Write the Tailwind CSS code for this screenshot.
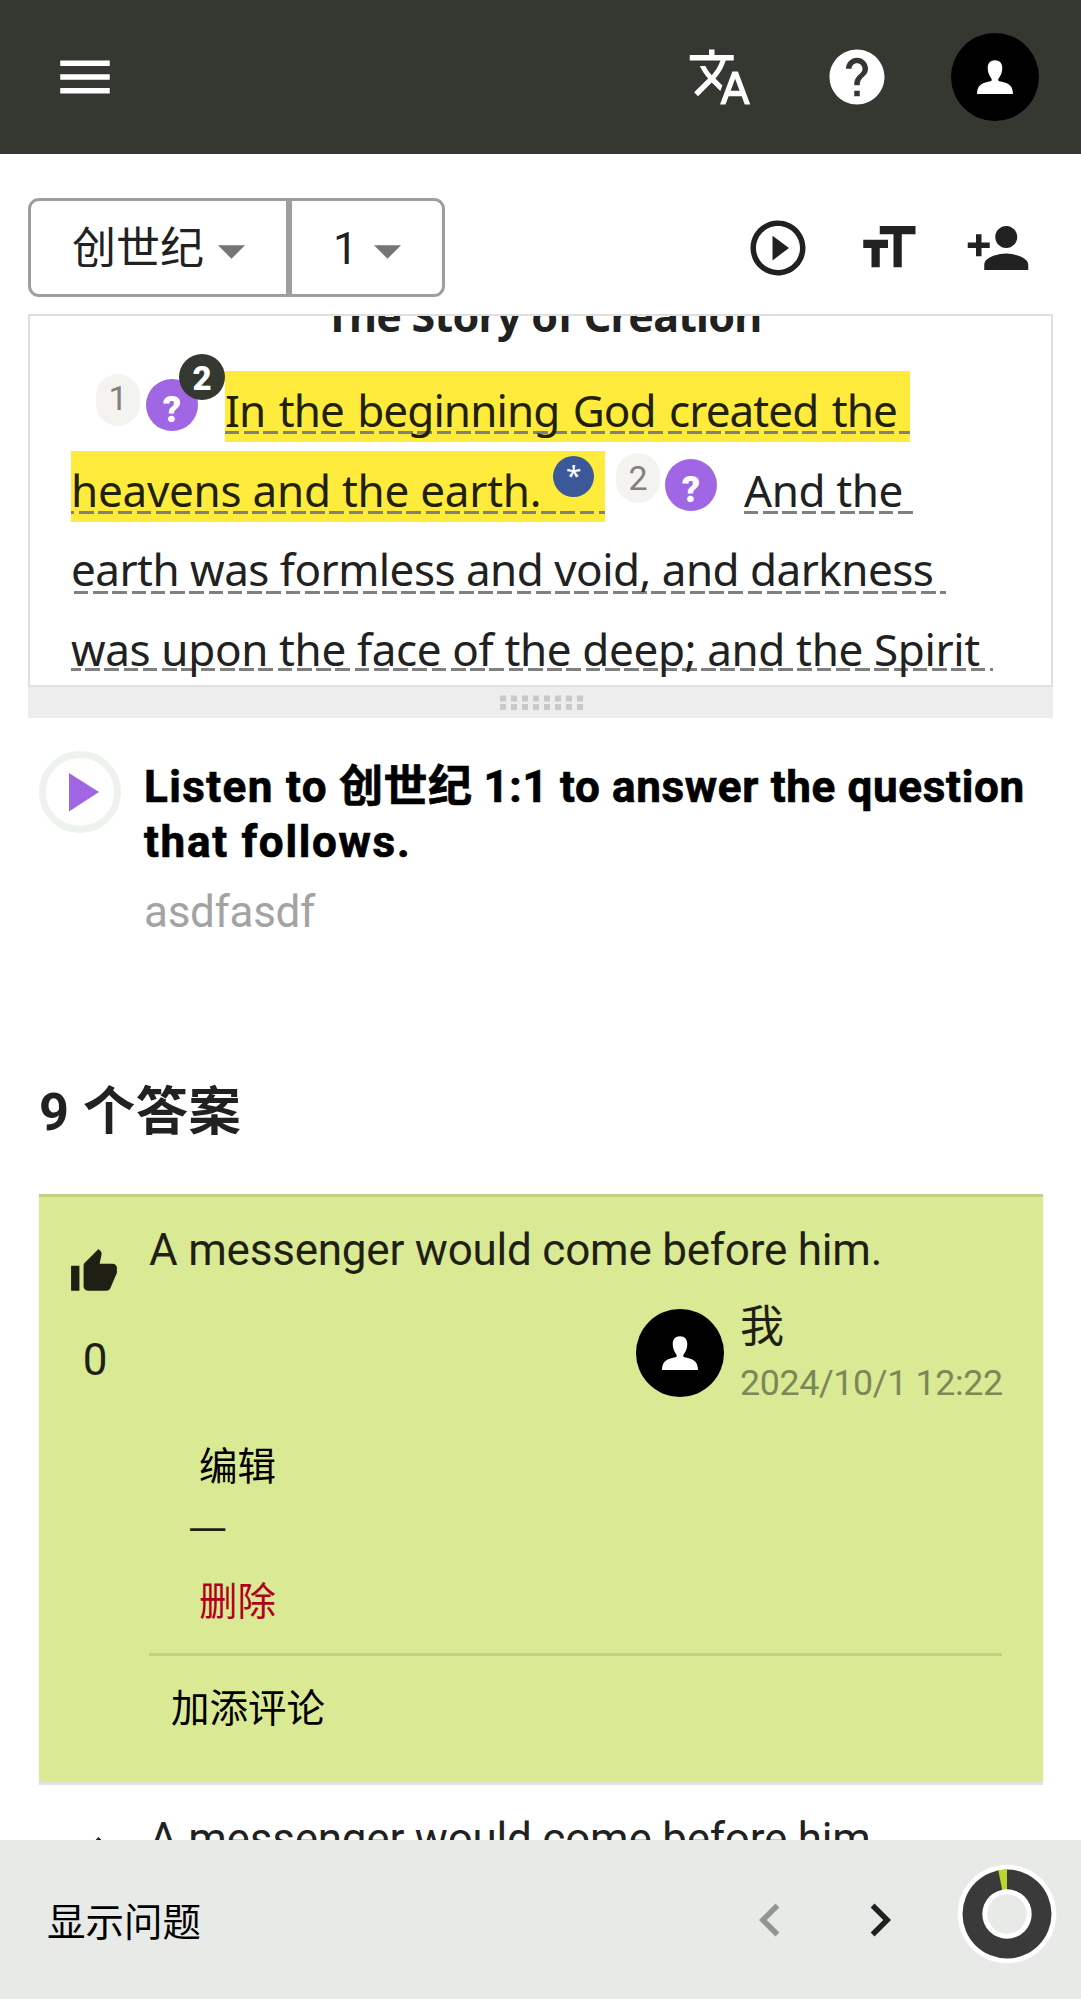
<!DOCTYPE html>
<html lang="zh-CN">
<head>
<meta charset="utf-8">
<title>创世纪 1</title>
<script src="https://cdn.jsdelivr.net/npm/@tailwindcss/browser@4"></script>
</head>
<body class="bg-white">
<div class="flex h-[1999px] w-[1081px] flex-col overflow-hidden bg-white font-[Roboto,'Noto_Sans_CJK_SC',sans-serif] text-[44px] text-[#212121]">

  <!-- App bar -->
  <header class="flex h-[154px] shrink-0 items-center bg-[#353831] pl-[52px] pr-[42px] text-white">
    <svg class="size-[66px]" viewBox="0 0 24 24" fill="currentColor"><path d="M3 18h18v-2H3v2zm0-5h18v-2H3v2zm0-7v2h18V6H3z"/></svg>
    <div class="ml-auto flex items-center">
      <svg class="size-[66px]" viewBox="0 0 24 24" fill="currentColor"><path d="M12.87 15.07l-2.54-2.51.03-.03c1.74-1.94 2.98-4.17 3.71-6.53H17V4h-7V2H8v2H1v1.99h11.17C11.5 7.92 10.44 9.75 9 11.35 8.07 10.32 7.3 9.19 6.69 8h-2c.73 1.63 1.73 3.17 2.98 4.56l-5.09 5.02L4 19l5-5 3.11 3.11.76-2.04zM18.5 10h-2L12 22h2l1.12-3h4.75L21 22h2l-4.5-12zm-2.62 7l1.62-4.33L19.12 17h-3.24z"/></svg>
      <svg class="ml-[71px] size-[66px]" viewBox="0 0 24 24" fill="currentColor"><path d="M12 2C6.48 2 2 6.48 2 12s4.48 10 10 10 10-4.48 10-10S17.52 2 12 2zm1 17h-2v-2h2v2zm2.07-7.75l-.9.92C13.45 12.9 13 13.5 13 15h-2v-.5c0-1.1.45-2.1 1.17-2.83l1.24-1.26c.37-.36.59-.86.59-1.41 0-1.1-.9-2-2-2s-2 .9-2 2H8c0-2.21 1.79-4 4-4s4 1.79 4 4c0 .88-.36 1.68-.93 2.25z"/></svg>
      <svg class="ml-[61px] size-[88px]" viewBox="0 0 88 88"><circle cx="44" cy="44" r="44" fill="#000"/><path fill="#fff" d="M44 27.3c4.6 0 7.3 3 7.3 7.8 0 5-2 8.2-3.6 10.4-.8 1.2-.6 2.3.7 2.7 7.2 1.5 13.6 2.6 13.6 12.8H26c0-10.2 6.4-11.3 13.6-12.8 1.3-.4 1.5-1.5.7-2.7-1.6-2.2-3.6-5.4-3.6-10.4 0-4.8 2.7-7.8 7.3-7.8z"/></svg>
    </div>
  </header>

  <!-- Chapter toolbar -->
  <div class="flex h-[160px] shrink-0 items-start pl-7 pr-[50px] pt-11">
    <div class="flex h-[99px] w-[261px] items-center rounded-l-[11px] border-[3px] border-[#9e9e9e] pl-[41px]">
      <span class="mt-[2px] leading-[60px]">创世纪</span>
      <svg class="ml-[14px] mt-[8px] h-[14px] w-[27px]" viewBox="0 0 10 5"><path fill="#757575" d="M0 0h10L5 5z"/></svg>
    </div>
    <div class="flex h-[99px] w-[156px] items-center rounded-r-[11px] border-[3px] border-[#9e9e9e] pl-[41px]">
      <span class="mt-[2px] leading-[60px]">1</span>
      <svg class="ml-[16px] mt-[8px] h-[14px] w-[27px]" viewBox="0 0 10 5"><path fill="#757575" d="M0 0h10L5 5z"/></svg>
    </div>
    <div class="ml-auto mt-[17px] flex items-center gap-11">
      <svg class="size-[66px]" viewBox="0 0 24 24" fill="currentColor"><path d="M10 16.5l6-4.500-6-4.500v9zM12 2C6.480 2 2 6.480 2 12s4.480 10 10 10 10-4.480 10-10S17.520 2 12 2zm0 18c-4.410 0-8-3.590-8-8s3.590-8 8-8 8 3.590 8 8-3.590 8-8 8z"/></svg>
      <svg class="size-[66px]" viewBox="0 0 24 24" fill="currentColor"><path d="M9 4v3h5v12h3V7h5V4H9zm-6 8h3v7h3v-7h3V9H3v3z"/></svg>
      <svg class="size-[66px]" viewBox="0 0 24 24" fill="currentColor"><path d="M15 12c2.210 0 4-1.790 4-4s-1.790-4-4-4-4 1.790-4 4 1.790 4 4 4zm-9-2V7H4v3H1v2h3v3h2v-3h3v-2H6zm9 4c-2.670 0-8 1.340-8 4v2h16v-2c0-2.660-5.330-4-8-4z"/></svg>
    </div>
  </div>

  <!-- Scripture pane -->
  <section class="mx-7 h-[373px] shrink-0 overflow-hidden border-2 border-[#e0e0e0] font-['Noto_Sans',sans-serif]" lang="en">
    <h2 class="-mt-[25px] h-[50px] pl-[295px] text-[43px] font-bold leading-[50px] tracking-[-0.75px] whitespace-nowrap">The Story of Creation</h2>
    <div class="mt-[30px] flex h-[80px] items-start whitespace-nowrap pl-[66px]">
      <span class="mt-[3px] h-[52px] w-11 rounded-[22px] bg-[#f4f3ef] text-center font-[Roboto] text-[34px] leading-[48px] text-[#808080]">1</span>
      <span class="relative ml-[6px] mt-2 size-[52px] rounded-full bg-[#a066e4] text-center font-[Roboto] text-[36px] font-black leading-[62px] text-white">?<span class="absolute -top-[25px] left-[33px] size-[46px] rounded-full bg-[#353831] text-[33px] leading-[49px]">2</span></span>
      <span class="ml-[27px] h-[71px] w-[685px] bg-[#ffeb3b] bg-[repeating-linear-gradient(90deg,#808080_0_14.5px,transparent_14.5px_19.25px)] bg-[length:100%_3px] bg-[position:0_60px] bg-no-repeat leading-[78px] tracking-[-0.9px] text-[#212109] [word-spacing:2.8px]">In the beginning God created the</span>
    </div>
    <div class="flex h-[79px] items-start whitespace-nowrap pl-[41px]">
      <span class="flex h-[71px] w-[534px] items-start bg-[#ffeb3b] bg-[repeating-linear-gradient(90deg,#808080_0_14.5px,transparent_14.5px_19.25px)] bg-[length:560px_3px] bg-[position:-11px_60px] bg-no-repeat leading-[78px] tracking-[-0.25px] text-[#212109]">heavens and the earth.<span class="ml-auto mr-[11px] mt-[5px] size-[41px] rounded-full bg-[#3b5998] text-center text-[28px] leading-[38px] text-white">*</span></span>
      <span class="ml-[11px] mt-[2px] h-[50px] w-11 rounded-[22px] bg-[#f4f3ef] text-center font-[Roboto] text-[34px] leading-[51px] text-[#808080]">2</span>
      <span class="ml-[5px] mt-2 size-[52px] rounded-full bg-[#a066e4] text-center font-[Roboto] text-[36px] font-black leading-[62px] text-white">?</span>
      <span class="ml-[27px] h-[71px] w-[169px] bg-[repeating-linear-gradient(90deg,#808080_0_14.5px,transparent_14.5px_19.25px)] bg-[length:100%_3px] bg-[position:0_60px] bg-no-repeat leading-[78px] tracking-[-0.4px]">And the</span>
    </div>
    <div class="flex h-[80px] items-start whitespace-nowrap pl-[41px]">
      <span class="h-[71px] w-[875px] bg-[repeating-linear-gradient(90deg,#808080_0_14.5px,transparent_14.5px_19.25px)] bg-[length:100%_3px] bg-[position:3px_61px] bg-no-repeat leading-[79px] tracking-[-0.52px]">earth was formless and void, and darkness</span>
    </div>
    <div class="flex h-[71px] items-start whitespace-nowrap pl-[41px]">
      <span class="h-[71px] w-[922px] bg-[repeating-linear-gradient(90deg,#808080_0_14.5px,transparent_14.5px_19.25px)] bg-[length:940px_3px] bg-[position:-5px_58px] bg-no-repeat leading-[78px] tracking-[-0.36px]">was upon the face of the deep; and the Spirit</span>
    </div>
  </section>

  <!-- Splitter handle -->
  <div class="mx-7 flex h-[31px] shrink-0 justify-center bg-[#ededed] pl-[2px] pt-[8px]">
    <svg class="h-[15px] w-[83px]" viewBox="0 0 83 15"><path stroke="#c9c9c9" stroke-width="6" stroke-dasharray="6 5" d="M0 3.500h83M0 12h83"/></svg>
  </div>

  <!-- Question -->
  <section class="flex h-[340px] shrink-0 items-start pl-[39px] pt-[33px]">
    <svg class="size-[82px]" viewBox="0 0 82 82"><circle cx="41" cy="41" r="37.500" fill="none" stroke="#eef2ed" stroke-width="7"/><path fill="#a066e4" d="M30 22v38.500L60 41z"/></svg>
    <div class="ml-[23px] pt-[9px]">
      <p class="font-bold leading-[55px] whitespace-nowrap text-black [-webkit-text-stroke:0.7px_#000]"><span class="tracking-[1.4px]">Listen to</span> <span class="tracking-[0.5px]">创世纪</span> <span class="tracking-[0.67px]">1:1 to answer the question</span><br><span class="tracking-[1.7px]">that follows.</span></p>
      <p class="mt-[15px] leading-[55px] tracking-[-0.3px] text-[#a3a3a3]">asdfasdf</p>
    </div>
  </section>

  <!-- Answers -->
  <main class="min-h-0 flex-1 overflow-hidden pl-[39px] pr-[38px]">
    <h3 class="mt-[25px] h-[111px] text-[52.25px] font-bold leading-[60px] tracking-[0.5px]">9 个答案</h3>
    <article class="flex h-[588px] border-t-[3px] border-[#c5d080] bg-[#dae993] pr-[41px] text-[#1f1f14]">
      <div class="flex w-[110px] flex-col items-center pt-[50px]">
        <svg class="size-[50px]" viewBox="0 0 24 24" fill="currentColor"><path d="M1 21h4V9H1v12zm22-11c0-1.100-.9-2-2-2h-6.310l.95-4.570.03-.32c0-.41-.17-.79-.44-1.060L14.170 1 7.590 7.590C7.220 7.950 7 8.450 7 9v10c0 1.100.9 2 2 2h9c.83 0 1.540-.5 1.840-1.220l3.020-7.050c.09-.23.14-.47.14-.73v-2z"/></svg>
        <span class="mt-[38px] pl-[2px] leading-[50px]">0</span>
      </div>
      <div class="flex-1 pt-[26px]">
        <p class="leading-[55px] tracking-[-0.22px] whitespace-nowrap">A messenger would come before him.</p>
        <div class="mt-[31px] flex h-[88px] justify-end">
          <svg class="size-[88px]" viewBox="0 0 88 88"><circle cx="44" cy="44" r="44" fill="#000"/><path fill="#fff" d="M44 27.300c4.600 0 7.300 3 7.300 7.800 0 5-2 8.200-3.600 10.400-.8 1.200-.6 2.300.7 2.700 7.200 1.500 13.600 2.600 13.600 12.800H26c0-10.200 6.400-11.300 13.600-12.800 1.300-.4 1.500-1.500.7-2.700-1.600-2.200-3.600-5.400-3.600-10.400 0-4.800 2.700-7.800 7.300-7.800z"/></svg>
          <div class="-mt-[10px] ml-[16px] w-[262px]">
            <p class="h-[56px] leading-[56px]">我</p>
            <p class="mt-[6px] text-[35.75px] leading-[44px] tracking-[-0.35px] whitespace-nowrap text-[#7b8757]">2024/10/1 12:22</p>
          </div>
        </div>
        <div class="flex flex-col pl-[41px] text-[38.5px]">
          <span class="mt-[42px] pl-[9px] leading-[56px] text-black">编辑</span>
          <span class="-ml-[2px] font-['Noto_Sans_CJK_SC'] text-[44px] leading-[56px]">—</span>
          <span class="mt-[23px] pl-[9px] leading-[56px] text-[#b00020]">删除</span>
        </div>
        <div class="mt-[23px] border-t-[3px] border-[#c5d080] pl-[22px] pt-[25px] text-[38.5px] leading-[56px] text-black">加添评论</div>
      </div>
    </article>
    <article class="flex h-[588px] border-t-[3px] border-[#e2e2e2] pr-[41px]">
      <div class="flex w-[110px] flex-col items-center pt-[50px]">
        <svg class="size-[50px]" viewBox="0 0 24 24" fill="currentColor"><path d="M1 21h4V9H1v12zm22-11c0-1.100-.9-2-2-2h-6.310l.95-4.570.03-.32c0-.41-.17-.79-.44-1.060L14.170 1 7.590 7.590C7.220 7.950 7 8.450 7 9v10c0 1.100.9 2 2 2h9c.83 0 1.540-.5 1.840-1.220l3.020-7.050c.09-.23.14-.47.14-.73v-2z"/></svg>
      </div>
      <p class="pt-[27px] leading-[55px] tracking-[-0.22px] whitespace-nowrap">A messenger would come before him.</p>
    </article>
  </main>

  <!-- Bottom navigation -->
  <footer class="flex h-[159px] shrink-0 items-center bg-[#e8eae7] pl-[47px] pr-[24px]">
    <span class="mt-[6px] text-[38.5px] leading-[56px] text-black">显示问题</span>
    <svg class="ml-auto size-[66px]" viewBox="0 0 24 24" fill="#929591"><path d="M15.410 7.410L14 6l-6 6 6 6 1.410-1.410L10.830 12z"/></svg>
    <svg class="ml-[44px] size-[66px]" viewBox="0 0 24 24" fill="currentColor"><path d="M10 6L8.590 7.410 13.170 12l-4.580 4.590L10 18l6-6z"/></svg>
    <svg class="-mt-[11px] ml-[44px] size-[100px]" viewBox="-50 -50 100 100">
      <circle r="49.300" fill="#fff"/><circle r="44.500" fill="#3a3a3a"/>
      <path fill="#bcd52f" d="M0 0V-44.500A44.500 44.500 0 0 0-8.700-43.640z"/>
      <circle r="24.700" fill="#fff"/><circle r="19.700" fill="#e8eae7"/>
    </svg>
  </footer>
</div>
</body>
</html>
